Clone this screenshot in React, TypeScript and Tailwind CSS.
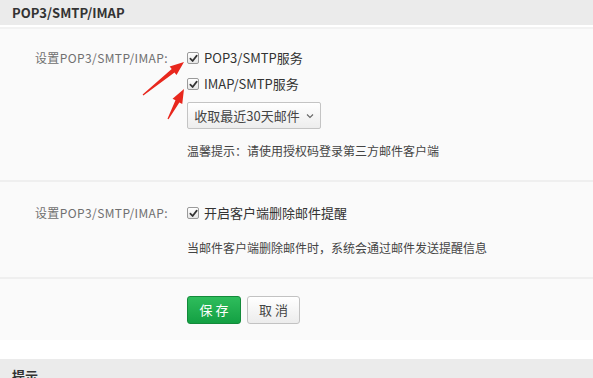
import React from "react";

const FONT = { fontFamily: "'Noto Sans CJK SC', 'Noto Sans', sans-serif" };

function Check() {
  return (
    <span className="inline-flex h-[12px] w-[12px] shrink-0 items-center justify-center rounded-[2px] border border-[#9a9a9a] bg-gradient-to-b from-[#ffffff] to-[#e6e6e6]">
      <svg width="9" height="9" viewBox="0 0 10 10">
        <path d="M1.5 5.2 L4 7.8 L8.6 1.8" fill="none" stroke="#333" strokeWidth="1.9" strokeLinecap="round" strokeLinejoin="round" />
      </svg>
    </span>
  );
}

function CheckRow({ label }: { label: string }) {
  return (
    <div className="flex h-[26px] items-center gap-[5px] text-[13px] text-[#333]">
      <Check />
      <span>{label}</span>
    </div>
  );
}

function Arrow({ x1, y1, x2, y2 }: { x1: number; y1: number; x2: number; y2: number }) {
  const dx = x2 - x1, dy = y2 - y1;
  const len = Math.hypot(dx, dy);
  const ux = dx / len, uy = dy / len;
  const px = -uy, py = ux;
  const headLen = 14, headW = 5.5, neckW = 2.2, tailW = 0.6;
  const bx = x2 - ux * headLen, by = y2 - uy * headLen;
  const pts = [
    [x1 + px * tailW, y1 + py * tailW],
    [bx + px * neckW, by + py * neckW],
    [bx + px * headW, by + py * headW],
    [x2, y2],
    [bx - px * headW, by - py * headW],
    [bx - px * neckW, by - py * neckW],
    [x1 - px * tailW, y1 - py * tailW],
  ];
  return <polygon points={pts.map((p) => p.join(",")).join(" ")} fill="#e8271d" />;
}

export default function App() {
  return (
    <div className="relative h-[378px] w-[593px] overflow-hidden bg-white" style={FONT}>
      <div className="flex h-[25px] items-center bg-[#ebebeb] px-[12px] text-[13px] font-bold text-[#333]">
        POP3/SMTP/IMAP
      </div>

      <div className="mt-[2px] border-t-2 border-[#f2f2f2] bg-[#fafafa]">
        <div className="flex border-b-2 border-[#efefef] pb-[19px] pt-[16px]">
          <div className="flex h-[26px] w-[168px] shrink-0 items-center justify-end text-[12px] tracking-[0.4px] text-[#707070]">
            设置POP3/SMTP/IMAP:
          </div>
          <div className="ml-[19px] flex flex-col">
            <CheckRow label="POP3/SMTP服务" />
            <CheckRow label="IMAP/SMTP服务" />
            <button className="mt-[5px] flex h-[27px] w-[134px] items-center justify-center gap-[6px] rounded-[2px] border border-[#c4c4c4] bg-gradient-to-b from-[#ffffff] to-[#ededed] text-[13px] text-[#444]">
              <span>收取最近30天邮件</span>
              <svg width="8" height="6" viewBox="0 0 8 6">
                <path d="M1 1.5 L4 4.5 L7 1.5" fill="none" stroke="#666" strokeWidth="1.1" />
              </svg>
            </button>
            <div className="mt-[12px] flex h-[20px] items-center text-[12px] text-[#444]">
              温馨提示：请使用授权码登录第三方邮件客户端
            </div>
          </div>
        </div>

        <div className="flex border-b-2 border-[#efefef] pb-[19px] pt-[18px]">
          <div className="flex h-[26px] w-[168px] shrink-0 items-center justify-end text-[12px] tracking-[0.4px] text-[#707070]">
            设置POP3/SMTP/IMAP:
          </div>
          <div className="ml-[19px] flex flex-col">
            <CheckRow label="开启客户端删除邮件提醒" />
            <div className="mt-[12px] flex h-[20px] items-center text-[12px] text-[#444]">
              当邮件客户端删除邮件时，系统会通过邮件发送提醒信息
            </div>
          </div>
        </div>

        <div className="flex gap-[6px] pb-[16px] pl-[187px] pt-[17px]">
          <button className="flex h-[28px] w-[54px] items-center justify-center rounded-[3px] border border-[#138a3a] bg-gradient-to-b from-[#2ebd5c] to-[#12a043] pl-[3px] text-[13px] tracking-[3px] text-white">
            保存
          </button>
          <button className="flex h-[28px] w-[53px] items-center justify-center rounded-[3px] border border-[#c2c2c2] bg-gradient-to-b from-[#ffffff] to-[#ececec] pl-[3px] text-[13px] tracking-[3px] text-[#444]">
            取消
          </button>
        </div>
      </div>

      <div className="mt-[19px] flex h-[30px] items-start bg-[#ebebeb] px-[12px] pt-[7px] text-[13px] font-bold text-[#333]">
        提示
      </div>

      <svg className="pointer-events-none absolute left-0 top-0" width="593" height="378">
        <Arrow x1={143} y1={95} x2={184} y2={62} />
        <Arrow x1={168} y1={119} x2={184} y2={89} />
      </svg>
    </div>
  );
}
